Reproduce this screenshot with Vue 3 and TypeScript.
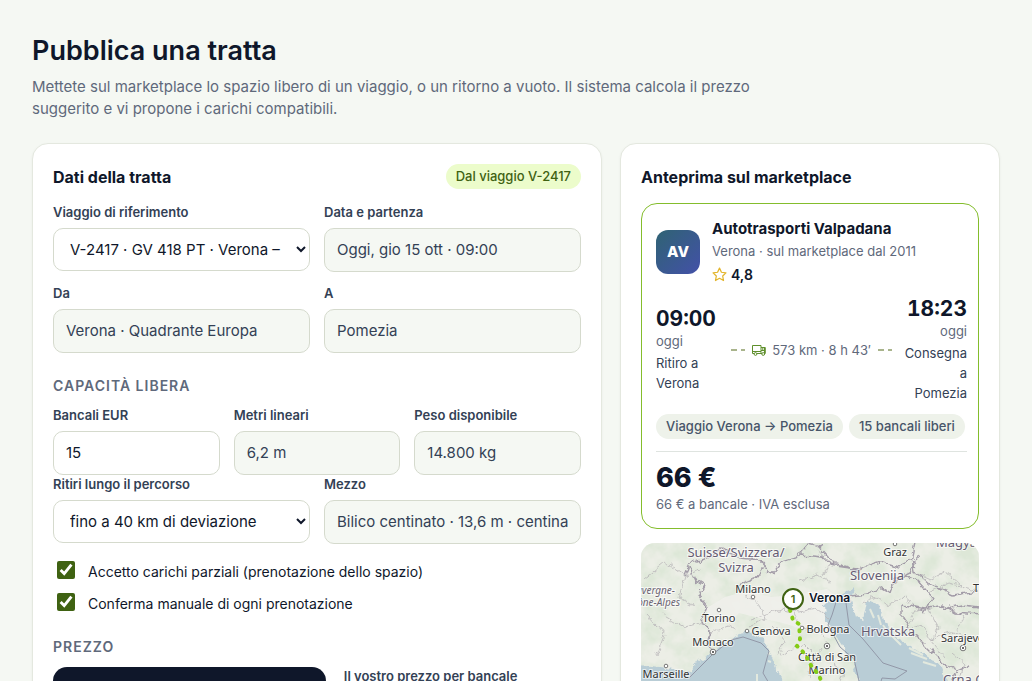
<script setup lang="ts">
import { ref } from 'vue'

interface MapLabel {
  text: string
  x: number
  y: number
  kind: 'city' | 'country' | 'region'
  anchor?: 'start' | 'middle' | 'end'
}

const trip = ref('V-2417')
const pallets = ref('15')
const detour = ref('40')
const partial = ref(true)
const manual = ref(true)

const chips = ['Viaggio Verona → Pomezia', '15 bancali liberi']

const labels: MapLabel[] = [
  { text: 'Suisse/Svizzera/', x: 95, y: 14, kind: 'country' },
  { text: 'Svizra', x: 95, y: 29, kind: 'country' },
  { text: 'Slovenija', x: 236, y: 37, kind: 'country' },
  { text: 'Hrvatska', x: 247, y: 93, kind: 'country' },
  { text: 'Magyarország', x: 295, y: 4, kind: 'country', anchor: 'start' },
  { text: 'Crna Gora', x: 302, y: 141, kind: 'country', anchor: 'start' },
  { text: 'Auvergne-', x: 34, y: 51, kind: 'region', anchor: 'end' },
  { text: 'Rhône-Alpes', x: 39, y: 63, kind: 'region', anchor: 'end' },
  { text: 'Milano', x: 112, y: 50, kind: 'city' },
  { text: 'Torino', x: 78, y: 79, kind: 'city' },
  { text: 'Genova', x: 130, y: 92, kind: 'city' },
  { text: 'Monaco', x: 72, y: 103, kind: 'city' },
  { text: 'Marseille', x: 25, y: 135, kind: 'city' },
  { text: 'Bologna', x: 187, y: 90, kind: 'city' },
  { text: 'Città di San', x: 186, y: 118, kind: 'city' },
  { text: 'Marino', x: 186, y: 131, kind: 'city' },
  { text: 'Graz', x: 254, y: 13, kind: 'city' },
  { text: 'Sarajevo', x: 300, y: 99, kind: 'city', anchor: 'start' },
  { text: 'Timișoara', x: 332, y: 49, kind: 'city', anchor: 'start' },
]

const towns: [number, number][] = [[112, 54], [78, 67], [106, 88], [25, 123], [161, 85], [254, 1]]
const capitals: [number, number][] = [[72, 109], [186, 103], [322, 105]]
</script>

<template>
  <main class="page">
    <header class="intro">
      <h1>Pubblica una tratta</h1>
      <p>Mettete sul marketplace lo spazio libero di un viaggio, o un ritorno a vuoto. Il sistema calcola il prezzo suggerito e vi propone i carichi compatibili.</p>
    </header>

    <div class="columns">
      <form class="card" @submit.prevent>
        <div class="card-head">
          <h2>Dati della tratta</h2>
          <span class="badge">Dal viaggio V-2417</span>
        </div>

        <div class="grid two">
          <div class="field">
            <label for="trip">Viaggio di riferimento</label>
            <select id="trip" v-model="trip">
              <option value="V-2417">V-2417 · GV 418 PT · Verona – Pomezia</option>
            </select>
          </div>
          <div class="field">
            <label for="date">Data e partenza</label>
            <input id="date" type="text" value="Oggi, gio 15 ott · 09:00" readonly />
          </div>
          <div class="field">
            <label for="from">Da</label>
            <input id="from" type="text" value="Verona · Quadrante Europa" readonly />
          </div>
          <div class="field">
            <label for="to">A</label>
            <input id="to" type="text" value="Pomezia" readonly />
          </div>
        </div>

        <h3 class="capacity">Capacità libera</h3>
        <div class="grid three">
          <div class="field">
            <label for="pallets">Bancali EUR</label>
            <input id="pallets" v-model="pallets" type="text" inputmode="numeric" />
          </div>
          <div class="field">
            <label for="meters">Metri lineari</label>
            <input id="meters" type="text" value="6,2 m" readonly />
          </div>
          <div class="field">
            <label for="weight">Peso disponibile</label>
            <input id="weight" type="text" value="14.800 kg" readonly />
          </div>
        </div>
        <div class="grid two">
          <div class="field">
            <label for="detour">Ritiri lungo il percorso</label>
            <select id="detour" v-model="detour">
              <option value="40">fino a 40 km di deviazione</option>
            </select>
          </div>
          <div class="field">
            <label for="vehicle">Mezzo</label>
            <input id="vehicle" type="text" value="Bilico centinato · 13,6 m · centinato" readonly />
          </div>
        </div>

        <div class="checks">
          <label class="check"><input v-model="partial" type="checkbox" />Accetto carichi parziali (prenotazione dello spazio)</label>
          <label class="check"><input v-model="manual" type="checkbox" />Conferma manuale di ogni prenotazione</label>
        </div>

        <h3 class="price-title">Prezzo</h3>
        <div class="pricing">
          <div class="suggested"></div>
          <div class="field">
            <label for="price">Il vostro prezzo per bancale</label>
            <input id="price" type="text" />
          </div>
        </div>
      </form>

      <section class="card">
        <div class="card-head">
          <h2>Anteprima sul marketplace</h2>
        </div>

        <article class="offer">
          <div class="carrier">
            <div class="avatar">AV</div>
            <div class="carrier-info">
              <strong>Autotrasporti Valpadana</strong>
              <span class="muted">Verona · sul marketplace dal 2011</span>
              <span class="rating">
                <svg width="15" height="15" viewBox="0 0 24 24" fill="none" stroke="#e3b52c" stroke-width="2" stroke-linejoin="round" aria-hidden="true">
                  <path d="M12 1.8l3.1 6.6 7.2 1-5.2 5 1.3 7.2-6.4-3.5-6.4 3.5 1.3-7.2-5.2-5 7.2-1z" />
                </svg>
                4,8
              </span>
            </div>
          </div>

          <div class="route">
            <div class="stop">
              <span class="time">09:00</span>
              <span class="muted">oggi</span>
              <span class="place">Ritiro a Verona</span>
            </div>
            <div class="leg">
              <i class="dash"></i>
              <span class="leg-text">
                <svg width="14" height="12" viewBox="0 0 14 12" fill="none" stroke="#5f8f2c" stroke-width="1" stroke-linejoin="round" aria-hidden="true">
                  <path d="M2 9.5H.5v-8H9v8H5M9 3.5h3.5v6M9 6.5h3.5M.5 7.5H9M9 9.5h1M10.8 3.5v3" />
                  <path d="M9 3.5h4.3v6h-.8" />
                  <circle cx="3.5" cy="10" r="1.4" />
                  <circle cx="11.2" cy="10" r="1.4" />
                </svg>
                573 km · 8 h 43′
              </span>
              <i class="dash"></i>
            </div>
            <div class="stop end">
              <span class="time">18:23</span>
              <span class="muted">oggi</span>
              <span class="place">Consegna a Pomezia</span>
            </div>
          </div>

          <div class="chips">
            <span v-for="chip in chips" :key="chip" class="chip">{{ chip }}</span>
          </div>

          <div class="total">
            <strong>66 €</strong>
            <span class="muted">66 € a bancale · IVA esclusa</span>
          </div>
        </article>

        <div class="map">
          <svg viewBox="0 0 338 220" preserveAspectRatio="xMinYMin slice" role="img" aria-label="Verona – Pomezia">
            <defs>
              <filter id="relief" x="0" y="0" width="100%" height="100%">
                <feTurbulence type="fractalNoise" baseFrequency="0.05" numOctaves="4" seed="7" />
                <feColorMatrix values="0 0 0 0 .72  0 0 0 0 .8  0 0 0 0 .68  2.6 0 0 0 -.95" />
              </filter>
              <filter id="rough" x="-5%" y="-5%" width="110%" height="110%">
                <feTurbulence type="fractalNoise" baseFrequency="0.12" numOctaves="3" seed="3" />
                <feDisplacementMap in="SourceGraphic" scale="8" xChannelSelector="R" yChannelSelector="G" />
              </filter>
            </defs>
            <rect width="338" height="220" fill="#eceee6" />
            <rect width="338" height="220" filter="url(#relief)" />
            <path class="plain" d="M64 66l20-12 22-6 24 6 22-2 34-6 10 8-10 20 4 22-22-8-26-8-28-6-16-4-10 10-18-4z" />

            <g filter="url(#rough)">
              <path class="sea" d="M-4 121L26 125l23 5 9-13 14-7 12-10 10-8 15-3 12 6 6 12 7 18 10 17v85H-4z" />
              <path class="sea" d="M195 52l19-7-4 11 5 16 7 6 4-20 12 7 5 14 9 14 20 12 28 18 8 22v80h-68l-22-85-5-20-17-25-11-18-1-16z" />
            </g>
            <path class="isles" d="M229 66l4 9M237 72l3 10M242 82l8 12M248 90l12 12M268 105l14 7M270 110l16 6M282 119l13 4M127 118l3 1M116 131v8" />

            <g class="sea-border">
              <path d="M48 135l24-24 18-14 12-3 18 6 8 8-6 22 7 12M196 56l-5 16-4 10 12 22 14 12 5 22M205 60l3 22 14 14 20 24 24 8-12 8-13-1-3 10" />
            </g>

            <g class="minor" filter="url(#rough)">
              <path d="M2 37l22-18 20 14 16-6M6 72l18 20-8 20M20 70l24 14 22-6M44 33l-6 22 16 8M104 52l14 8 6 16-16 8M110 76l30-10 18 3 16-4 14 10M150 66l8 16 22 8 10 12M132 84l12 14-6 14M140 112l22-12 12 12-6 22M68 91l20-8 8 4M158 38l18-6 14 8M176 6l12 14-6 12M222 60l14-6 10 8 16-8 14 12-10 16M262 88l18-6 10 14 22-8 20 10M288 66l10 18-8 14 12 16M308 62l14 12-6 16M272 28l18 8 14-8 16 14M286 50l22-10 30 8M312 110l12 10-6 18M192 120l10 8-4 16M180 106l-10 16 14 10" />
            </g>
            <g class="border" filter="url(#rough)">
              <path d="M44 33l5-12 22-8 10-8 18 10 20 2 12 14 10-12 14-4 12-14 16 4M49 24l6 14 8 5M98 42l18-8 8-12M63 43l-5 10 8 10-6 14 10 12-4 12 8 8M160 12l22 2 6 8 28 4 24-8 18 6 12-8M178 4l14 16 28 8M209 54l18-2 12-8 10 6 4-12 16-8 10-18M272 16l2 12 16 14 22 10 26-4M262 32l14 6 16 18-10 14M262 62l22 4 18-4 14 8 22 2M262 62v14l10 14 18 18 12 12 14 8" />
              <path d="M274 0l-4 18M338 64l-18-2-16 4M310 140l6-12 14-6" />
            </g>

            <g class="town">
              <circle v-for="([cx, cy], i) in towns" :key="i" :cx="cx" :cy="cy" r="1.8" />
            </g>
            <g v-for="([cx, cy], i) in capitals" :key="`c${i}`" class="town">
              <circle :cx="cx" :cy="cy" r="2.8" />
              <circle class="dot" :cx="cx" :cy="cy" r="1.1" />
            </g>
            <text v-for="l in labels" :key="l.text" :x="l.x" :y="l.y" :class="l.kind" :text-anchor="l.anchor ?? 'middle'">{{ l.text }}</text>

            <path class="route-line" d="M149 67l3 10 6 4 1 15-3 7 9 9 4 9 8 10 6 12" />
            <circle cx="152" cy="56" r="10" fill="#fff" stroke="#3f6212" stroke-width="2" />
            <text x="152" y="60" class="pin" text-anchor="middle">1</text>
            <text x="168" y="59" class="origin">Verona</text>
          </svg>
        </div>
      </section>
    </div>
  </main>
</template>

<style>
html {
  scrollbar-width: none;
}
body {
  background: #f5f8f3;
}
</style>

<style scoped>
* {
  box-sizing: border-box;
}
.page {
  padding: 32px;
  font-family: Inter, "Liberation Sans", sans-serif;
  color: #0f172a;
  font-size: 15px;
}
h1,
h2,
h3,
p {
  margin: 0;
}
h1 {
  font-size: 27px;
  line-height: 37px;
  font-weight: 600;
}
.intro p {
  max-width: 720px;
  margin-top: 7px;
  font-size: 15px;
  line-height: 22px;
  color: #5f697b;
}
.columns {
  display: grid;
  grid-template-columns: minmax(0, 3fr) minmax(0, 2fr);
  gap: 18px;
  align-items: start;
  margin-top: 23px;
}
.card {
  padding: 20px;
  background: #fff;
  border: 1px solid #e4e8df;
  border-radius: 16px;
  box-shadow: 0 1px 3px rgba(15, 23, 42, 0.05);
}
.card-head {
  display: flex;
  align-items: center;
  justify-content: space-between;
  height: 25px;
  margin-bottom: 14px;
}
h2 {
  font-size: 16px;
  line-height: 24px;
  font-weight: 700;
}
.badge,
.chip {
  padding: 0 10px;
  border-radius: 13px;
  font-size: 13px;
  line-height: 24px;
  padding-bottom: 1px;
  font-weight: 500;
  white-space: nowrap;
}
.badge {
  background: #ecfccb;
  color: #3f6212;
}
.grid {
  display: grid;
  gap: 12px 14px;
}
.two {
  grid-template-columns: repeat(2, minmax(0, 1fr));
}
.three {
  grid-template-columns: repeat(3, minmax(0, 1fr));
}
.field {
  display: flex;
  flex-direction: column;
  gap: 7px;
  min-width: 0;
}
.field label {
  font-size: 13px;
  line-height: 18px;
  font-weight: 600;
  color: #334155;
}
.field input,
.field select {
  width: 100%;
  height: 44px;
  padding: 0 12px;
  border: 1px solid #d5dacd;
  border-radius: 10px;
  background: #fff;
  color: #0f172a;
  font-family: inherit;
  font-size: 15px;
}
.field input {
  padding-bottom: 2px;
}
.field select {
  height: 43px;
}
.field input[readonly] {
  background: #f5f8f3;
  color: #334155;
}
h3 {
  font-size: 14px;
  line-height: 20px;
  font-weight: 600;
  letter-spacing: 1px;
  text-transform: uppercase;
  color: #5f697b;
}
.capacity {
  margin: 23px 0 10px;
}
.price-title {
  margin: 18px 0 10px;
}
.checks {
  margin-top: 11px;
}
.check {
  display: flex;
  align-items: center;
  gap: 13px;
  height: 32px;
  font-size: 14px;
}
.check input {
  width: 18px;
  height: 18px;
  margin: 0 0 2px 4px;
  accent-color: #3f6212;
}
.pricing {
  display: grid;
  grid-template-columns: minmax(0, 1.15fr) minmax(0, 1fr);
  gap: 18px;
}
.suggested {
  min-height: 120px;
  border-radius: 14px;
  background: #0f172a;
}
.offer {
  padding: 13px 11px 13px 14px;
  border: 1px solid #84bd2c;
  border-radius: 16px;
}
.muted {
  font-size: 13px;
  color: #5f697b;
}
.carrier {
  display: flex;
  align-items: center;
  gap: 12px;
}
.avatar {
  display: grid;
  place-items: center;
  width: 44px;
  height: 44px;
  border-radius: 12px;
  background: linear-gradient(135deg, #2f6373, #4351a8);
  color: #fff;
  font-size: 15px;
  font-weight: 800;
}
.carrier-info {
  display: flex;
  flex-direction: column;
  line-height: 23px;
}
.carrier-info strong {
  font-weight: 700;
}
.rating {
  display: flex;
  align-items: center;
  gap: 4px;
  font-size: 14px;
  font-weight: 600;
}
.route {
  display: flex;
  align-items: center;
  gap: 12px;
  margin-top: 11px;
}
.stop {
  display: flex;
  flex: 0 0 63px;
  flex-direction: column;
  line-height: 20px;
}
.stop.end {
  text-align: right;
}
.stop.end .time {
  align-self: flex-end;
}
.time {
  font-size: 21px;
  line-height: 24px;
  font-weight: 700;
  font-variant-numeric: tabular-nums;
}
.place {
  margin-top: 2px;
  font-size: 13px;
  color: #334155;
}
.leg {
  display: flex;
  flex: 1;
  align-items: center;
  gap: 7px;
  font-size: 13px;
  color: #5f697b;
  white-space: nowrap;
}
.leg-text {
  display: flex;
  align-items: center;
  gap: 6px;
}
.dash {
  flex: 1;
  height: 2px;
  background: repeating-linear-gradient(90deg, #a9b48c 0 6px, transparent 6px 10px);
}
.chips {
  display: flex;
  flex-wrap: wrap;
  gap: 6px;
  margin-top: 11px;
}
.chip {
  background: #eef2ea;
  color: #475569;
}
.total {
  display: flex;
  flex-direction: column;
  margin-top: 12px;
  padding-top: 11px;
  border-top: 1px solid #dfe4e0;
  line-height: 22px;
}
.total strong {
  font-size: 27px;
  line-height: 30px;
  font-weight: 800;
}
.map {
  height: 220px;
  margin-top: 14px;
  overflow: hidden;
  border-radius: 14px;
}
.map svg {
  display: block;
  width: 100%;
  height: 100%;
}
.plain {
  fill: #f0f0eb;
  opacity: 0.9;
}
.sea {
  fill: #b9cdd6;
}
.isles {
  fill: none;
  stroke: #e3e9de;
  stroke-width: 2;
}
.sea-border,
.border,
.minor {
  fill: none;
  stroke: #a39ca8;
  stroke-width: 1.4;
}
.sea-border {
  stroke: #9298a8;
  stroke-width: 1;
}
.minor {
  stroke: #b9b6b9;
  stroke-width: 0.8;
}
.town {
  fill: #fff;
  stroke: #555;
  stroke-width: 0.8;
}
.dot {
  fill: #444;
  stroke: none;
}
.city,
.country,
.region {
  font-family: "Noto Sans", sans-serif;
  font-size: 11px;
  fill: #333;
  stroke: rgba(255, 255, 255, 0.65);
  stroke-width: 2px;
  paint-order: stroke;
}
.country {
  font-size: 13px;
  fill: #655b72;
}
.region {
  font-size: 10px;
  font-style: italic;
  fill: #6d6674;
}
.route-line {
  fill: none;
  stroke: #84cc16;
  stroke-width: 4;
  stroke-linecap: round;
  stroke-dasharray: 1 7;
}
.pin {
  font-size: 11px;
  font-weight: 600;
  fill: #3f6212;
}
.origin {
  font-size: 12px;
  font-weight: 600;
  fill: #0f172a;
  stroke: rgba(255, 255, 255, 0.8);
  stroke-width: 2px;
  paint-order: stroke;
}
</style>
